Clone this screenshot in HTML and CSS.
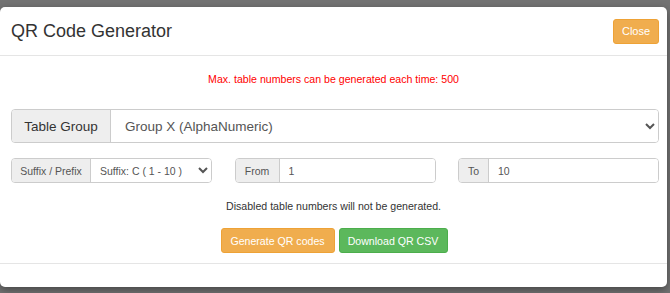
FILE: index.html
```html
<!DOCTYPE html>
<html>
<head>
<meta charset="utf-8">
<link rel="stylesheet" href="styles.css">
</head>
<body>
<div class="modal">
  <div class="modal-header">
    <h4 class="modal-title">QR Code Generator</h4>
    <button class="btn btn-warning btn-close">Close</button>
  </div>
  <div class="modal-body">
    <p class="limit">Max. table numbers can be generated each time: 500</p>
    <div class="input-group lg">
      <span class="addon addon-lg">Table Group</span>
      <select class="control control-lg"><option>Group X (AlphaNumeric)</option></select>
    </div>
    <div class="row">
      <div class="input-group sm">
        <span class="addon addon-sm addon-suffix">Suffix / Prefix</span>
        <select class="control control-sm control-select"><option>Suffix: C ( 1 - 10 )</option></select>
      </div>
      <div class="input-group sm">
        <span class="addon addon-sm addon-from">From</span>
        <input class="control control-sm" value="1">
      </div>
      <div class="input-group sm">
        <span class="addon addon-sm addon-to">To</span>
        <input class="control control-sm" value="10">
      </div>
    </div>
    <p class="note">Disabled table numbers will not be generated.</p>
    <div class="actions">
      <button class="btn btn-warning btn-generate">Generate QR codes</button>
      <button class="btn btn-success btn-download">Download QR CSV</button>
    </div>
  </div>
  <div class="modal-footer"></div>
</div>
</body>
</html>
```
FILE: styles.css
```css
* { box-sizing: border-box; }
html, body { margin: 0; padding: 0; }
body {
  background: #737373;
  font-family: "Liberation Sans", Arial, sans-serif;
  color: #333;
  height: 293px;
  overflow: hidden;
}
.modal {
  margin: 7px 3px 0 0;
  background: #fff;
  border-radius: 5px;
  box-shadow: 0 3px 8px rgba(0,0,0,0.4);
}
.modal-header {
  height: 49px;
  display: flex;
  align-items: center;
  justify-content: space-between;
  padding: 0 8px 0 11px;
  border-bottom: 1px solid #e5e5e5;
}
.modal-title {
  margin: 0;
  font-size: 18px;
  font-weight: normal;
  color: #333;
}
.btn {
  font-family: "Liberation Sans", Arial, sans-serif;
  font-size: 10.6px;
  color: #fff;
  border: 1px solid transparent;
  border-radius: 3px;
  height: 25px;
  padding: 0;
  cursor: pointer;
}
.btn-close { width: 46px; font-size: 11px; }
.btn-generate { width: 114px; }
.btn-download { width: 109px; }
.btn-warning { background: #f0ad4e; border-color: #eea236; }
.btn-success { background: #5cb85c; border-color: #4cae4c; }
.modal-body {
  padding: 16px 11px 10px 11px;
}
.limit {
  margin: 0;
  text-align: center;
  color: #ff0000;
  font-size: 10.6px;
  line-height: 15px;
}
.input-group {
  display: flex;
  border: 1px solid #ccc;
  border-radius: 4px;
  overflow: hidden;
}
.input-group.lg {
  margin-top: 22px;
  height: 34px;
  width: 648px;
}
.addon {
  background: #eee;
  border-right: 1px solid #ccc;
  color: #333;
  display: flex;
  align-items: center;
  justify-content: center;
  flex: none;
}
.addon-lg { width: 99px; font-size: 13.5px; }
.control {
  flex: 1;
  min-width: 0;
  border: 0;
  background: #fff;
  font-family: "Liberation Sans", Arial, sans-serif;
  color: #555;
  outline: none;
}
.control-lg { font-size: 13.5px; padding: 0 8px 0 10px; }
.row {
  margin-top: 15px;
  display: grid;
  grid-template-columns: 201px 201px 201px;
  column-gap: 22.5px;
  width: 648px;
}
.input-group.sm { height: 25px; }
.addon-sm { font-size: 10.5px; color: #555; padding: 0; }
.addon-suffix { width: 79px; }
.addon-from { width: 44px; }
.addon-to { width: 30px; }
.control-sm { font-size: 10.5px; padding: 0 5px 0 9px; }
.control-select { padding-left: 5px; }
.note {
  margin: 16px 0 0;
  text-align: center;
  font-size: 10.6px;
  line-height: 15px;
  color: #333;
}
.actions {
  margin-top: 14px;
  display: flex;
  justify-content: center;
  gap: 4px;
  padding-left: 1px;
}
.modal-footer {
  height: 24px;
  border-top: 1px solid #e5e5e5;
}
```
